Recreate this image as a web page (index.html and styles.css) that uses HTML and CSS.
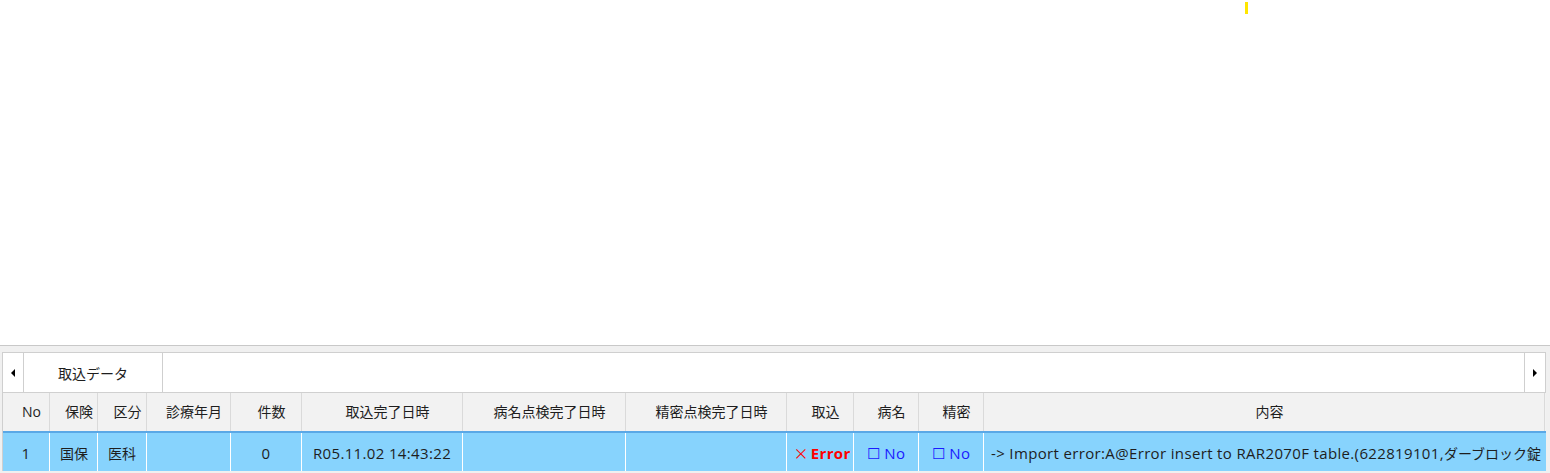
FILE: index.html
```html
<!DOCTYPE html>
<html>
	<head>
		<meta charset="utf-8">
		<title>取込データ</title>
		<link rel="stylesheet" href="styles.css">
	</head>
	<body>
		<div class="top">
			<div class="mark"></div>
		</div>
		<div class="panel">
			<div class="tabs">
				<div class="arrow left"><span class="tri-left"></span></div>
				<div class="tab">取込データ</div>
				<div class="tab-rest"></div>
				<div class="arrow right"><span class="tri-right"></span></div>
			</div>
			<div class="grid">
				<div class="row head">
					<div class="cell">No</div>
					<div class="cell">保険</div>
					<div class="cell">区分</div>
					<div class="cell">診療年月</div>
					<div class="cell">件数</div>
					<div class="cell">取込完了日時</div>
					<div class="cell">病名点検完了日時</div>
					<div class="cell">精密点検完了日時</div>
					<div class="cell">取込</div>
					<div class="cell">病名</div>
					<div class="cell">精密</div>
					<div class="cell">内容</div>
				</div>
				<div class="row data">
					<div class="cell c">1</div>
					<div class="cell l jp">国保</div>
					<div class="cell l jp">医科</div>
					<div class="cell"></div>
					<div class="cell c">0</div>
					<div class="cell c">R05.11.02 14:43:22</div>
					<div class="cell"></div>
					<div class="cell"></div>
					<div class="cell c err"><span class="x">×</span> Error</div>
					<div class="cell c no">☐ No</div>
					<div class="cell c no">☐ No</div>
					<div class="cell l msg">-&gt; Import error:A@Error insert to RAR2070F table.(622819101,<span class="kana">ダーブロック錠</span></div>
				</div>
			</div>
		</div>
	</body>
</html>
```
FILE: styles.css
```css
*{
	margin: 0;
	padding: 0;
	box-sizing: border-box;
}
body{
	background: #ffffff;
	font-family: "Open Sans", "Noto Sans CJK JP", sans-serif;
	font-size: 14px;
	color: #1e1e1e;
	overflow: hidden;
	height: 473px;
}
.top{
	height: 345px;
	padding-top: 2px;
}
.mark{
	width: 3px;
	height: 12px;
	margin-left: 1245px;
	background: #ffe600;
}
.panel{
	border-top: 1px solid #c8c8c8;
	background: #f0f0f0;
	padding: 6px 2px 0 2px;
	height: 128px;
}
.tabs{
	display: flex;
	height: 40px;
	background: #ffffff;
	border: 1px solid #cfcfcf;
	border-bottom: none;
	margin-right: 2px;
}
.arrow{
	width: 21px;
	display: flex;
	align-items: center;
	justify-content: center;
}
.arrow.left{
	border-right: 1px solid #cfcfcf;
}
.arrow.right{
	border-left: 1px solid #cfcfcf;
}
.tri-left{
	width: 0;
	height: 0;
	border-top: 4px solid transparent;
	border-bottom: 4px solid transparent;
	border-right: 4px solid #000000;
}
.tri-right{
	width: 0;
	height: 0;
	border-top: 4px solid transparent;
	border-bottom: 4px solid transparent;
	border-left: 4px solid #000000;
}
.tab{
	width: 139px;
	border-right: 1px solid #cfcfcf;
	display: flex;
	align-items: center;
	justify-content: center;
}
.tab-rest{
	flex: 1;
}
.grid{
	border-left: 1px solid #cfcfcf;
	margin-right: 2px;
	background: #ffffff;
}
.row{
	display: grid;
	grid-template-columns: 47px 48px 49px 84px 71px 161px 163px 161px 67px 65px 65px 561px;
}
.row .cell{
	white-space: nowrap;
	overflow: hidden;
	display: flex;
	align-items: center;
}
.head{
	height: 41px;
	background: #f2f2f2;
	border-top: 1px solid #d0d0d0;
	border-bottom: 2px solid #5aa8e6;
}
.head .cell{
	justify-content: center;
	padding-left: 11px;
	border-right: 1px solid #dadada;
	padding-bottom: 2px;
}
.data{
	height: 38px;
	background: #87d3fd;
}
.data .cell{
	border-right: 1px solid #ffffff;
	padding-top: 1px;
	font-size: 15px;
	letter-spacing: 0.35px;
}
.data .cell.jp{
	font-size: 14px;
	letter-spacing: 0;
}
.data .cell.c{
	justify-content: center;
}
.data .cell.l{
	padding-left: 10px;
}
.data .cell.msg{
	padding-left: 7px;
	justify-content: flex-start;
	border-right: none;
}
.kana{
	font-size: 14px;
	letter-spacing: 0;
}
.err{
	color: #ff0000;
	font-weight: bold;
	padding-left: 4px;
}
.err .x{
	font-family: "Noto Sans CJK JP", sans-serif;
	font-weight: normal;
	margin-right: 2px;
}
.no{
	color: #1a1aff;
}
```
